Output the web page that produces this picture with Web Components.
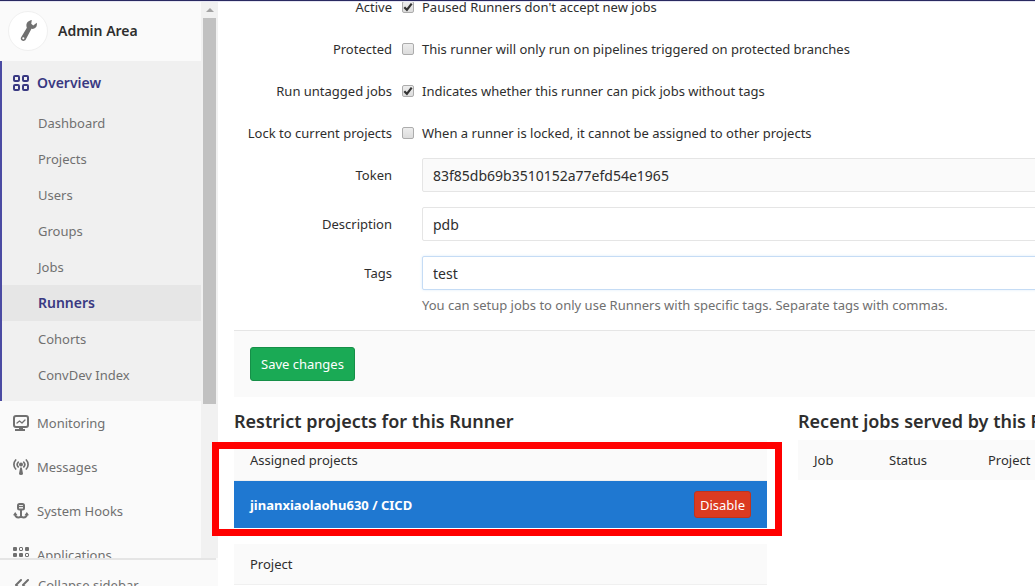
<!DOCTYPE html>
<html lang="en">
<head>
<meta charset="utf-8">
<title>Runner · Admin Area</title>
<style>
body{margin:0;font:13px/20px "Noto Sans","Open Sans",sans-serif;color:#2e2e2e;background:#fff}
</style>
</head>
<body>
<admin-app></admin-app>
<script>
const icons={
overview:'<g fill="none" stroke="currentColor" stroke-width="2"><rect x="1" y="1" width="5" height="5" rx="1"/><rect x="10" y="1" width="5" height="5" rx="1"/><rect x="1" y="10" width="5" height="5" rx="1"/><rect x="10" y="10" width="5" height="5" rx="1"/></g>',
monitoring:'<g fill="none" stroke="currentColor"><rect x="1" y="1" width="14" height="11" rx="2" stroke-width="2"/><path d="M4 8l2.500-2 2.500 2 3-3" stroke-width="1.300" stroke-linecap="round" stroke-linejoin="round"/></g><path fill="currentColor" d="M6 12h4v2h2v2H2v-2h4z"/>',
messages:'<g fill="none" stroke="currentColor" stroke-width="1.700" stroke-linecap="round"><path d="M2.700 1C.3 3.500.3 7.500 2.700 10M13.300 1c2.400 2.500 2.400 6.500 0 9M5.200 3.200c-1.300 1.500-1.300 3.300 0 4.700M10.800 3.200c1.300 1.500 1.300 3.300 0 4.700"/></g><circle cx="8" cy="5.500" r="2" fill="currentColor"/><path fill="currentColor" d="M7.200 8.500h1.600l1.200 6q0 1.500-2 1.500t-2-1.500z"/>',
hooks:'<g fill="none" stroke="currentColor" stroke-width="2"><rect x="5" y="1" width="6" height="5.500" rx="1.500"/><path d="M5 3.500h6" stroke-width="1.200"/><path d="M8 7v8M2 11c.2 2.500 1.500 3.500 3.500 3.500 1.500 0 2.200-.5 2.500-1.500.3 1 1 1.500 2.500 1.500 2 0 3.300-1 3.500-3.500"/></g><path fill="currentColor" d="M0 12.200L2.200 9l2.300 3.200zM11.500 12.200L13.800 9l2.200 3.200z"/>',
applications:'<g fill="currentColor"><rect width="4" height="4" rx="1"/><rect x="12" width="4" height="4" rx="1"/><rect y="6" width="4" height="4" rx="1"/><rect x="6" y="6" width="4" height="4" rx="1"/><rect y="12" width="4" height="4" rx="1"/><rect x="12" y="12" width="4" height="4" rx="1"/></g><g fill="none" stroke="currentColor"><rect x="6.500" y=".5" width="3" height="3" rx=".5"/><rect x="12.500" y="6.500" width="3" height="3" rx=".5"/></g>',
collapse:'<path fill="none" stroke="currentColor" stroke-width="2" stroke-linecap="round" stroke-linejoin="round" d="M7 3L2 8l5 5M14 3L9 8l5 5"/>',
wrench:'<path fill="currentColor" d="M11.500 0L11 3.500l1.800 1.500 3.200-2.500c.8 3.800-1.500 6-4.800 5.500L6 17.800C4.500 20.500.5 18.500 1.700 15.800L7 7C5.500 3.500 8 .5 11.500 0z"/><circle cx="3.800" cy="16.700" r="1" fill="#fff"/>'
};
function define(name,html,setup){
  const t=document.createElement('template');t.innerHTML=html;
  customElements.define(name,class extends HTMLElement{
    connectedCallback(){
      if(this.shadowRoot)return;
      this.attachShadow({mode:'open'}).append(t.content.cloneNode(true));
      if(setup)setup(this,this.shadowRoot);
    }
  });
}
define('ui-icon',`<style>:host{display:block;flex:none;width:16px;height:16px}svg{display:block;width:100%;height:100%}</style><svg viewBox="0 0 16 16" aria-hidden="true"></svg>`,(h,r)=>{
  const s=r.querySelector('svg');
  if(h.getAttribute('name')==='wrench')s.setAttribute('viewBox','0 0 17 20');
  s.innerHTML=icons[h.getAttribute('name')];
});
define('nav-item',`<style>
:host{display:block;color:#707070}
a{display:flex;align-items:center;gap:8px;height:44px;padding-left:13px;color:inherit;text-decoration:none}
:host([sub]) a{height:36px;padding-left:38px}
:host([current]){color:#393982;font-size:14px;font-weight:600}
:host([current][sub]) a{background:#e6e6e6;box-shadow:inset 2px 0 #4b4ba3}
</style><a href="#"><slot name="icon"></slot><span><slot></slot></span></a>`);
define('scroll-track',`<style>
:host{display:flex;flex-direction:column;align-items:center;background:#f1f1f1;padding:7px 2px 0}
i{border:solid transparent;border-width:0 4px 4px;border-bottom-color:#a3a3a3;margin-bottom:6px}
b{width:100%;flex:0 0 386px;background:#c1c1c1}
</style><i></i><b></b>`);
define('admin-sidebar',`<style>
:host{display:flex;flex-direction:column;height:calc(100vh - 1px);overflow:hidden;background:#fafafa}
.top{flex:1;min-height:0;display:grid;grid-template-columns:1fr 17px;overflow:hidden}
.brand{display:flex;align-items:center;gap:10px;height:60px;padding-left:8px;font-size:14px;font-weight:600}
.avatar{box-sizing:border-box;width:40px;height:40px;border:1px solid #f0f0f0;border-radius:50%;background:#fff;color:#707070;display:grid;place-items:center}
.avatar ui-icon{width:19px;height:22px}
section{background:#f0f0f0;box-shadow:inset 2px 0 #4b4ba3;padding-bottom:8px}
button{flex:0 0 28px;margin:0 2px 0 0;border:0;border-top:2px solid #e5e5e5;background:#fafafa;font:inherit;color:#707070;padding:15px 0 0 14px;display:flex;align-items:flex-start;gap:8px;box-sizing:border-box;text-align:left;overflow:hidden}
button ui-icon{margin-top:2px}
</style>
<div class="top"><nav>
<div class="brand"><span class="avatar"><ui-icon name="wrench"></ui-icon></span><span>Admin Area</span></div>
<section><nav-item current><ui-icon slot="icon" name="overview"></ui-icon>Overview</nav-item>
<nav-item sub>Dashboard</nav-item><nav-item sub>Projects</nav-item><nav-item sub>Users</nav-item><nav-item sub>Groups</nav-item><nav-item sub>Jobs</nav-item><nav-item sub current>Runners</nav-item><nav-item sub>Cohorts</nav-item><nav-item sub>ConvDev Index</nav-item></section>
<nav-item><ui-icon slot="icon" name="monitoring"></ui-icon>Monitoring</nav-item>
<nav-item><ui-icon slot="icon" name="messages"></ui-icon>Messages</nav-item>
<nav-item><ui-icon slot="icon" name="hooks"></ui-icon>System Hooks</nav-item>
<nav-item><ui-icon slot="icon" name="applications"></ui-icon>Applications</nav-item>
</nav><scroll-track></scroll-track></div>
<button type="button"><ui-icon name="collapse"></ui-icon><span>Collapse sidebar</span></button>`);
define('check-row',`<style>
:host{display:grid;grid-template-columns:158px 1fr;gap:10px;height:42px;align-items:center}
label{text-align:right}
.hint{display:flex;align-items:center;gap:8px;text-align:left}
input{appearance:none;box-sizing:border-box;flex:none;width:12px;height:12px;margin:0;border:1px solid #acacac;border-radius:2px;background:linear-gradient(#ededed,#dcdcdc)}
input:checked{background:url("data:image/svg+xml,%3Csvg xmlns='http://www.w3.org/2000/svg' viewBox='0 0 10 10'%3E%3Cpath d='M1.300 5.200L3.900 7.800L8.700 1.600' fill='none' stroke='%23333' stroke-width='2.200'/%3E%3C/svg%3E"),linear-gradient(#ededed,#dcdcdc)}
</style><label for="c"><slot name="label"></slot></label><label class="hint"><input type="checkbox" id="c"><span><slot></slot></span></label>`,(h,r)=>{r.querySelector('input').checked=h.hasAttribute('checked')});
define('text-row',`<style>
:host{display:grid;grid-template-columns:158px 1fr;column-gap:30px;margin-bottom:15px}
label{text-align:right;padding-top:7px}
input{box-sizing:border-box;display:block;width:100%;height:34px;border:1px solid #e5e5e5;border-radius:2px;padding:0 10px;font:inherit;font-size:14px;color:inherit;background:#fff;outline:0}
input[readonly]{background:#fafafa}
:host([active]) input{border-color:#c5dcf5;box-shadow:0 0 3px #dcebfa}
.help{color:#707070;padding-top:5px}
.help:empty{display:none}
</style><label for="t"></label><div><input id="t" type="text"><div class="help"></div></div>`,(h,r)=>{
  r.querySelector('label').textContent=h.getAttribute('label');
  const i=r.querySelector('input');i.value=h.getAttribute('value');i.readOnly=h.hasAttribute('readonly');
  r.querySelector('.help').textContent=h.getAttribute('help')||'';
});
define('runner-form',`<style>
:host{display:block}form{margin:0}
footer{border-top:1px solid #e5e5e5;background:#fafafa;padding:16px}
button{display:block;height:34px;box-sizing:border-box;border:1px solid #168f48;border-radius:3px;background:#1aaa55;color:#fff;font:inherit;padding:0 10px}
.checks{margin-bottom:4px}
</style><form>
<div class="checks">
<check-row checked><span slot="label">Active</span>Paused Runners don't accept new jobs</check-row>
<check-row><span slot="label">Protected</span>This runner will only run on pipelines triggered on protected branches</check-row>
<check-row checked><span slot="label">Run untagged jobs</span>Indicates whether this runner can pick jobs without tags</check-row>
<check-row><span slot="label">Lock to current projects</span>When a runner is locked, it cannot be assigned to other projects</check-row>
</div>
<text-row label="Token" value="83f85db69b3510152a77efd54e1965" readonly></text-row>
<text-row label="Description" value="pdb"></text-row>
<text-row active label="Tags" value="test" help="You can setup jobs to only use Runners with specific tags. Separate tags with commas."></text-row>
<footer><button type="button">Save changes</button></footer></form>`);
const tableCss=`h4{margin:0 0 7px;font-size:18px;line-height:24px;font-weight:600}
table{width:100%;border-collapse:separate;border-spacing:0;table-layout:fixed}
th{font-weight:400;text-align:left;background:#fafafa;height:40px;padding:0 16px}`;
define('assigned-projects',`<style>:host{display:block}${tableCss}
.marked{position:relative;margin-bottom:16px}
.marked::after{content:"";position:absolute;inset:2px -15px -8px -22px;border:7px solid #f00;pointer-events:none}
th{border-bottom:1px solid #f0f0f0}
td{background:#1f78d1;color:#fff;font-weight:700;height:47px;padding:0 16px}
td.act{text-align:right}
button{height:27px;box-sizing:border-box;border:1px solid #c0341d;border-radius:3px;background:#db3b21;color:#fff;font:inherit;font-weight:400;padding:0 5px;vertical-align:middle}
</style><h4>Restrict projects for this Runner</h4>
<div class="marked"><table><thead><tr><th>Assigned projects</th><th></th></tr></thead><tbody><tr><td>jinanxiaolaohu630 / CICD</td><td class="act"><button type="button">Disable</button></td></tr></tbody></table></div>
<table><thead><tr><th>Project</th><th></th></tr></thead></table>`);
define('recent-jobs',`<style>:host{display:block}${tableCss}
.j{width:75px}.s{width:99px}th{box-sizing:border-box}
</style><h4>Recent jobs served by this Runner</h4>
<table><thead><tr><th class="j">Job</th><th class="s">Status</th><th>Project</th><th>Commit</th><th>Finished at</th></tr></thead></table>`);
define('admin-app',`<style>
:host{display:grid;grid-template-columns:218px 1fr;height:100vh;grid-template-rows:1px 1fr;overflow:hidden}
header{grid-column:1/-1;background:#292961;box-shadow:0 1px #e6e6f2;position:relative;z-index:1}
main{min-width:0;padding-left:16px;position:relative}
.content{min-width:1097px;margin-top:-15px}
.cols{display:grid;grid-template-columns:1fr 1fr;gap:31px;margin-top:12px}
</style><header></header><admin-sidebar></admin-sidebar>
<main><div class="content"><runner-form></runner-form><div class="cols"><assigned-projects></assigned-projects><recent-jobs></recent-jobs></div></div></main>`);
</script>
</body>
</html>
